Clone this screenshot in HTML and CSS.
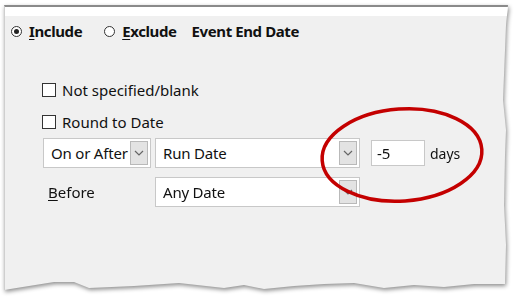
FILE: index.html
```html
<!DOCTYPE html>
<html>
<head>
<meta charset="utf-8">
<link rel="stylesheet" href="styles.css">
</head>
<body>
<div class="page">
  <div class="shadow">
    <div class="paper">
      <div class="titlebar"></div>
      <div class="content">
        <div class="row radios">
          <span class="radio on"></span><span class="rlabel first"><u>I</u>nclude</span>
          <span class="radio"></span><span class="rlabel second"><u>E</u>xclude</span>
          <span class="title">Event End Date</span>
        </div>
        <div class="row check first"><span class="box"></span><span>Not specified/blank</span></div>
        <div class="row check second"><span class="box"></span><span>Round to Date</span></div>
        <div class="row fields">
          <div class="combo c1"><span class="val">On or After</span><span class="btn"><svg width="10" height="6" viewBox="0 0 10 6"><path d="M1 1 L5 5 L9 1" fill="none" stroke="#666" stroke-width="1.2"/></svg></span></div>
          <div class="combo c2"><span class="val">Run Date</span><span class="btn"><svg width="10" height="6" viewBox="0 0 10 6"><path d="M1 1 L5 5 L9 1" fill="none" stroke="#666" stroke-width="1.2"/></svg></span></div>
          <div class="input">-5</div>
          <span class="unit">days</span>
        </div>
        <div class="row fields before">
          <span class="lbl"><u>B</u>efore</span>
          <div class="combo c2"><span class="val">Any Date</span><span class="btn"><svg width="10" height="6" viewBox="0 0 10 6"><path d="M1 1 L5 5 L9 1" fill="none" stroke="#666" stroke-width="1.2"/></svg></span></div>
        </div>
      </div>
    </div>
  </div>
  <svg class="mark" width="518" height="299" viewBox="0 0 518 299">
    <ellipse cx="402" cy="155" rx="80" ry="46" transform="rotate(-4 402 155)" fill="none" stroke="#c40000" stroke-width="3.5"/>
  </svg>
</div>
</body>
</html>
```
FILE: styles.css
```css
html, body {
  margin: 0;
  padding: 0;
  background: #ffffff;
}
body {
  font-family: "Noto Sans", "Open Sans", sans-serif;
  font-size: 15px;
  color: #111;
}
.page {
  position: relative;
  width: 518px;
  height: 299px;
  padding: 5px 0 0 4px;
  box-sizing: border-box;
}
.shadow {
  filter: drop-shadow(1px 2px 2px rgba(0,0,0,0.45));
}
.paper {
  width: 505px;
  height: 287px;
  box-sizing: border-box;
  background: #f0f0f0;
  border-top: 2px solid #8a8a8a;
  border-left: 1px solid #cfcfcf;
  clip-path: polygon(0 0, 504px 0, 502px 20px, 501px 45px, 499px 95px, 502px 125px, 501px 150px, 500px 200px, 502px 240px, 501px 279px,
    470px 279px, 440px 282px, 410px 280px, 380px 283px, 350px 278px, 320px 279px, 290px 281px, 260px 284px, 240px 280px, 220px 283px,
    175px 278px, 130px 281px, 85px 283px, 70px 277px, 50px 277px, 0 285px);
}
.titlebar {
  height: 9px;
  background: #ffffff;
}
.content {
  padding-left: 6px;
}
.row {
  display: flex;
  align-items: center;
}
.radios {
  margin-top: 5px;
  height: 20px;
  font-weight: bold;
  letter-spacing: -0.4px;
}
.radio {
  width: 9px;
  height: 9px;
  border: 1px solid #333;
  border-radius: 50%;
  background: #fff;
  position: relative;
  box-sizing: content-box;
}
.radio.on::after {
  content: "";
  position: absolute;
  left: 2px;
  top: 2px;
  width: 5px;
  height: 5px;
  border-radius: 50%;
  background: #222;
}
.rlabel {
  margin-left: 7px;
}
.rlabel.first { margin-right: 22px; }
.rlabel.second { margin-right: 15px; }
.check {
  height: 20px;
  padding-left: 31px;
}
.check.first { margin-top: 39px; }
.check.second { margin-top: 12px; }
.box {
  width: 12px;
  height: 12px;
  border: 1px solid #333;
  background: #fff;
  margin-right: 6px;
}
.fields {
  height: 30px;
  padding-left: 32px;
}
.fields:not(.before) { margin-top: 6px; }
.before { margin-top: 9px; }
.combo {
  height: 30px;
  box-sizing: border-box;
  border: 1px solid #c8c8c8;
  background: #fff;
  display: flex;
  align-items: center;
  padding: 2px;
}
.combo .val {
  flex: 1;
  padding-left: 5px;
  white-space: nowrap;
  letter-spacing: -0.2px;
}
.combo .btn {
  width: 18px;
  align-self: stretch;
  box-sizing: border-box;
  background: #e3e3e3;
  border: 1px solid #b9b9b9;
  display: flex;
  align-items: center;
  justify-content: center;
}
.c1 { width: 108px; margin-right: 4px; }
.c2 { width: 205px; }
.input {
  margin-left: 11px;
  width: 54px;
  height: 26px;
  box-sizing: border-box;
  border: 1px solid #c8c8c8;
  background: #fff;
  padding-left: 5px;
  line-height: 24px;
}
.unit {
  margin-left: 5px;
  font-size: 14px;
}
.lbl {
  width: 107px;
  padding-left: 5px;
}
u { text-decoration-thickness: 1px; text-underline-offset: 2px; }
.mark {
  position: absolute;
  left: 0;
  top: 0;
  pointer-events: none;
}
```
